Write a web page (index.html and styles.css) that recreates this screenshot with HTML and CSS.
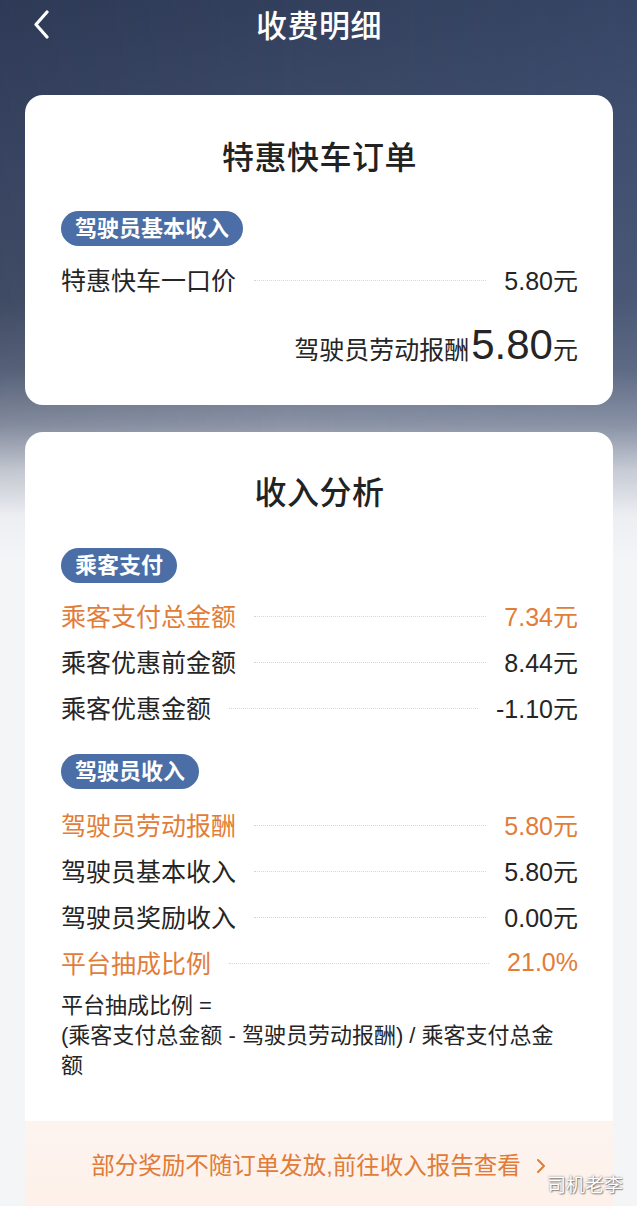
FILE: index.html
```html
<!DOCTYPE html>
<html lang="zh-CN">
<head>
<meta charset="utf-8">
<title>收费明细</title>
<link rel="stylesheet" href="styles.css">
</head>
<body>
<div class="page">
  <header class="topbar">
    <svg class="back" width="20" height="30" viewBox="0 0 20 30" aria-hidden="true">
      <path d="M15 2 L4 14.5 L15 27" fill="none" stroke="#ffffff" stroke-width="3.2" stroke-linecap="round" stroke-linejoin="round"/>
    </svg>
    <h1 class="topbar-title">收费明细</h1>
  </header>

  <section class="card card-order">
    <h2 class="card-title">特惠快车订单</h2>
    <div class="pill">驾驶员基本收入</div>
    <div class="row">
      <span class="label">特惠快车一口价</span>
      <span class="dots"></span>
      <span class="value">5.80元</span>
    </div>
    <div class="total">
      <span class="total-label">驾驶员劳动报酬</span><span class="total-num">5.80</span><span class="total-unit">元</span>
    </div>
  </section>

  <section class="card card-analysis">
    <h2 class="card-title">收入分析</h2>
    <div class="pill">乘客支付</div>
    <div class="row orange">
      <span class="label">乘客支付总金额</span>
      <span class="dots"></span>
      <span class="value">7.34元</span>
    </div>
    <div class="row">
      <span class="label">乘客优惠前金额</span>
      <span class="dots"></span>
      <span class="value">8.44元</span>
    </div>
    <div class="row">
      <span class="label">乘客优惠金额</span>
      <span class="dots"></span>
      <span class="value">-1.10元</span>
    </div>

    <div class="pill pill-second">驾驶员收入</div>
    <div class="row orange">
      <span class="label">驾驶员劳动报酬</span>
      <span class="dots"></span>
      <span class="value">5.80元</span>
    </div>
    <div class="row">
      <span class="label">驾驶员基本收入</span>
      <span class="dots"></span>
      <span class="value">5.80元</span>
    </div>
    <div class="row">
      <span class="label">驾驶员奖励收入</span>
      <span class="dots"></span>
      <span class="value">0.00元</span>
    </div>
    <div class="row orange">
      <span class="label">平台抽成比例</span>
      <span class="dots"></span>
      <span class="value">21.0%</span>
    </div>
    <p class="formula">平台抽成比例 =<br>(乘客支付总金额 - 驾驶员劳动报酬) / 乘客支付总金额</p>

    <div class="notice">
      <span>部分奖励不随订单发放,前往收入报告查看</span>
      <svg class="notice-arrow" width="12" height="18" viewBox="0 0 12 18" aria-hidden="true">
        <path d="M3 3 L9 9 L3 15" fill="none" stroke="#e07b38" stroke-width="2" stroke-linecap="round" stroke-linejoin="round"/>
      </svg>
    </div>
  </section>
</div>
<div class="watermark">司机老李</div>
</body>
</html>
```

FILE: styles.css
```css
* {
  box-sizing: border-box;
}

html, body {
  margin: 0;
  padding: 0;
}

body {
  position: relative;
  font-family: "Liberation Sans", "Noto Sans CJK SC", sans-serif;
  color: #252525;
  background-color: #f4f5f7;
  background-image: linear-gradient(180deg, #33405d 0px, #3e4b69 150px, #48556f 300px, #5f6a82 370px, #8c94a6 425px, #c9cdd6 470px, #eceef2 515px, #f4f5f7 560px, #f4f5f7 100%);
  background-repeat: no-repeat;
  min-height: 1206px;
  overflow: hidden;
}

/* horizontal tint of the dark header area */
body::before {
  content: "";
  position: absolute;
  left: 0;
  top: 0;
  width: 100%;
  height: 520px;
  background: linear-gradient(90deg, rgba(20, 28, 50, 0.16) 0%, rgba(20, 28, 50, 0) 45%, rgba(90, 120, 180, 0.10) 100%);
  -webkit-mask-image: linear-gradient(180deg, #000 0%, #000 60%, transparent 100%);
  mask-image: linear-gradient(180deg, #000 0%, #000 60%, transparent 100%);
  pointer-events: none;
}

.page {
  position: relative;
  display: flex;
  flex-direction: column;
  padding: 0 24px 0 25px;
}

.topbar {
  height: 54px;
  display: flex;
  align-items: center;
  justify-content: center;
  position: relative;
}

.back {
  position: absolute;
  left: 7px;
  top: 10px;
}

.topbar-title {
  margin: 0;
  font-size: 31px;
  font-weight: 500;
  color: #ffffff;
  line-height: 54px;
  letter-spacing: 0.5px;
}

.card {
  background: #ffffff;
  border-radius: 18px;
  display: flex;
  flex-direction: column;
  align-items: stretch;
}

.card-order {
  margin-top: 41px;
  padding: 41px 35px 35px 36px;
}

.card-analysis {
  margin-top: 27px;
  padding: 39px 0 0 0;
  min-height: 800px;
}

.card-analysis > .card-title,
.card-analysis > .pill,
.card-analysis > .row {
  margin-left: 36px;
  margin-right: 35px;
}

.card-title {
  margin: 0;
  text-align: center;
  font-size: 32px;
  line-height: 44px;
  font-weight: 500;
  color: #222222;
  letter-spacing: 0.5px;
}

.pill {
  align-self: flex-start;
  margin-top: 31px;
  margin-bottom: 10px;
  height: 35px;
  padding: 0 14px;
  border-radius: 18px;
  background: #4a6ea5;
  color: #ffffff;
  font-size: 22px;
  font-weight: 700;
  line-height: 35px;
}

.card-analysis > .pill {
  margin-top: 33px;
  margin-bottom: 9px;
}

.card-analysis > .pill.pill-second {
  margin-top: 24px;
  margin-bottom: 12px;
}

.row {
  display: flex;
  align-items: center;
  height: 46px;
  font-size: 25px;
  color: #252525;
}

.row .label {
  white-space: nowrap;
}

.row .dots {
  flex: 1;
  margin: 0 18px;
  border-top: 1px dotted #d6d6d6;
  height: 0;
  position: relative;
  top: 1px;
}

.row .value {
  white-space: nowrap;
}

.row.orange {
  color: #e27d38;
}

.total {
  margin-top: 18px;
  display: flex;
  justify-content: flex-end;
  align-items: baseline;
  height: 50px;
  line-height: 50px;
  color: #252525;
}

.total-label {
  font-size: 25px;
}

.total-num {
  font-size: 42px;
  margin-left: 2px;
}

.total-unit {
  font-size: 25px;
}

.formula {
  margin: 6px 0 0 36px;
  width: 500px;
  font-size: 22px;
  line-height: 30px;
  color: #252525;
}

.notice {
  margin-top: 40px;
  padding: 30px 0 40px;
  display: flex;
  justify-content: center;
  align-items: center;
  gap: 12px;
  background: linear-gradient(180deg, #fdf4ef 0%, #fdf0e9 100%);
  color: #e07b38;
  font-size: 23.5px;
  line-height: 30px;
}

.notice-arrow {
  margin-left: 2px;
}

.watermark {
  position: absolute;
  left: 547px;
  top: 1170px;
  font-family: "Noto Sans CJK SC", sans-serif;
  font-size: 19px;
  line-height: 28px;
  color: #ffffff;
  text-shadow: 0 0 2px rgba(0, 0, 0, 0.55), 1px 1px 1px rgba(0, 0, 0, 0.35);
}
```
